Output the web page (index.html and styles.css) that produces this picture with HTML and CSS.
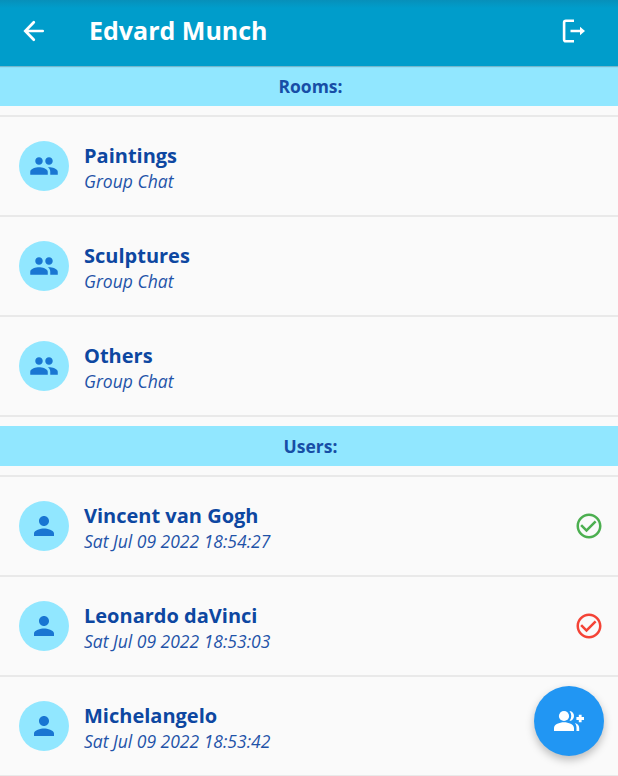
FILE: index.html
```html
<!DOCTYPE html>
<html lang="en">
<head>
<meta charset="utf-8">
<title>Edvard Munch</title>
<link rel="stylesheet" href="styles.css">
</head>
<body>
<svg class="defs" aria-hidden="true">
  <symbol id="group" viewBox="0 0 24 24"><path d="M16 11c1.66 0 2.99-1.34 2.99-3S17.66 5 16 5s-3 1.34-3 3 1.34 3 3 3zm-8 0c1.66 0 2.99-1.34 2.99-3S9.66 5 8 5 5 6.340 5 8s1.340 3 3 3zm0 2c-2.330 0-7 1.170-7 3.500V19h14v-2.500c0-2.330-4.670-3.500-7-3.500zm8 0c-.29 0-.62.020-.97.050 1.160.84 1.970 1.970 1.970 3.450V19h6v-2.500c0-2.330-4.670-3.500-7-3.500z"/></symbol>
  <symbol id="person" viewBox="0 0 24 24"><path d="M12 12c2.210 0 4-1.790 4-4s-1.790-4-4-4-4 1.790-4 4 1.790 4 4 4zm0 2c-2.670 0-8 1.340-8 4v2h16v-2c0-2.660-5.330-4-8-4z"/></symbol>
  <symbol id="check" viewBox="0 0 24 24"><path d="M16.590 7.580L10 14.170l-3.590-3.580L5 12l5 5 8-8zM12 2C6.480 2 2 6.480 2 12s4.480 10 10 10 10-4.480 10-10S17.520 2 12 2zm0 18c-4.420 0-8-3.580-8-8s3.580-8 8-8 8 3.580 8 8-3.580 8-8 8z"/></symbol>
</svg>
<header class="bar">
  <svg class="back" viewBox="0 0 30 30"><path d="M23.700 15H7M14.800 6.300L6.300 15l8.500 8.700"/></svg>
  <h1 class="title">Edvard Munch</h1>
  <svg class="logout" viewBox="0 0 30 30"><path class="line" d="M15 4.700H6.900Q5.100 4.700 5.100 6.500v17q0 1.800 1.800 1.800H15M11.500 15h10.500"/><path class="tip" d="M21 10.800l5 4.200-5 4.200z"/></svg>
</header>
<main>
  <h2 class="section">Rooms:</h2>
  <ul class="list">
    <li class="row"><span class="avatar"><svg><use href="#group"/></svg></span><div class="text"><p class="name">Paintings</p><p class="sub">Group Chat</p></div></li>
    <li class="row"><span class="avatar"><svg><use href="#group"/></svg></span><div class="text"><p class="name">Sculptures</p><p class="sub">Group Chat</p></div></li>
    <li class="row"><span class="avatar"><svg><use href="#group"/></svg></span><div class="text"><p class="name">Others</p><p class="sub">Group Chat</p></div></li>
  </ul>
  <h2 class="section">Users:</h2>
  <ul class="list">
    <li class="row"><span class="avatar"><svg><use href="#person"/></svg></span><div class="text"><p class="name">Vincent van Gogh</p><p class="sub">Sat Jul 09 2022 18:54:27</p></div><svg class="status online"><use href="#check"/></svg></li>
    <li class="row"><span class="avatar"><svg><use href="#person"/></svg></span><div class="text"><p class="name">Leonardo daVinci</p><p class="sub">Sat Jul 09 2022 18:53:03</p></div><svg class="status offline"><use href="#check"/></svg></li>
    <li class="row"><span class="avatar"><svg><use href="#person"/></svg></span><div class="text"><p class="name">Michelangelo</p><p class="sub">Sat Jul 09 2022 18:53:42</p></div></li>
  </ul>
</main>
<button class="fab" aria-label="Add user">
  <svg viewBox="0 0 30 30"><circle cx="10" cy="10" r="5.100"/><path d="M0 25v-3C0 18.500 5.500 16.300 10 16.300s10 2.200 10 5.700V25zM15.500 5C21.500 5.500 21.500 14.500 15.500 15C17.900 12 17.900 8 15.500 5zM20.800 17c2.800.8 4.400 2.500 4.400 5V25h-2.700v-3c0-2-.5-3.700-1.700-5z"/><path class="plus" d="M26.200 8.700v7.600M22.400 12.500h7.600"/></svg>
</button>
</body>
</html>
```

FILE: styles.css
```css
* { box-sizing: border-box; margin: 0; padding: 0; }
html { height: 100%; overflow: hidden; }
body {
  height: 100%;
  overflow: hidden;
  background: #fafafa;
  color: #0d47a1;
  font-family: "Open Sans", "Noto Sans", sans-serif;
}
.defs { display: none; }
.bar {
  display: flex;
  align-items: center;
  height: 66px;
  padding: 0 29px 4px 19px;
  background: linear-gradient(#0790ba, #009dcb 8px);
  box-shadow: 0 1px 1px rgba(0, 0, 0, .2);
  position: relative;
}
.back { width: 30px; height: 30px; fill: none; stroke: #fff; stroke-width: 2.7; stroke-linecap: round; }
.title { flex: 1; margin-left: 40px; padding-bottom: 2px; color: #fff; font-size: 25px; line-height: 34px; font-weight: 700; }
.logout { width: 30px; height: 30px; }
.logout .line { fill: none; stroke: #fff; stroke-width: 2.6; }
.logout .tip { fill: #fff; }
.section {
  height: 40px;
  padding: 0 0 0 3px;
  background: #91e7ff;
  color: #174ea6;
  font-size: 17.5px;
  line-height: 41px;
  font-weight: 700;
  text-align: center;
}
.list { margin: 9px 0; list-style: none; border-bottom: 2px solid #e9e9e9; }
.row {
  display: flex;
  align-items: center;
  height: 100px;
  padding: 0 14px 0 19px;
  border-top: 2px solid #e9e9e9;
}
.avatar {
  display: flex;
  align-items: center;
  justify-content: center;
  width: 50px;
  height: 50px;
  border-radius: 50%;
  background: #91e7ff;
}
.avatar svg, .status { width: 30px; height: 30px; }
.avatar svg { fill: #1976d2; }
.text { flex: 1; margin-left: 15px; padding-top: 2px; }
.name { font-size: 20px; line-height: 27px; font-weight: 700; }
.sub { font-size: 17.5px; line-height: 24px; font-style: italic; color: #1f53a8; }
.online { fill: #4caf50; }
.offline { fill: #f44336; }
.fab {
  position: fixed;
  right: 14px;
  bottom: 20px;
  display: flex;
  align-items: center;
  justify-content: center;
  width: 70px;
  height: 70px;
  border: 0;
  border-radius: 50%;
  background: #2196f3;
  box-shadow: 0 4px 8px rgba(0, 0, 0, .25);
}
.fab svg { width: 30px; height: 30px; fill: #fff; }
.fab .plus { stroke: #fff; stroke-width: 2.8; }
```
